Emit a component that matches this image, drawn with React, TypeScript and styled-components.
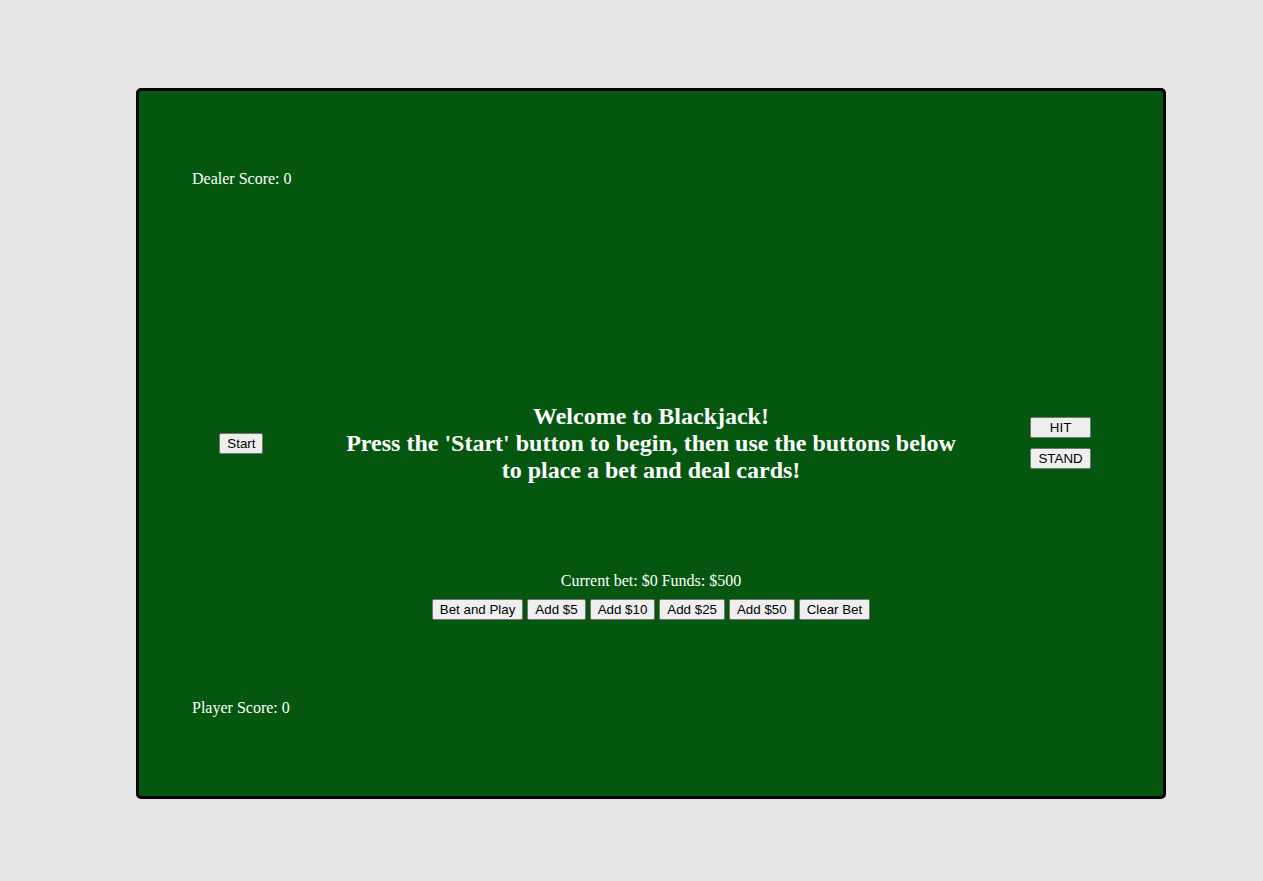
import React from "react";
import styled, { createGlobalStyle } from "styled-components";

const GlobalStyle = createGlobalStyle`
  html, body {
    margin: 0;
    padding: 0;
    background-color: #e5e5e5;
    font-family: "Liberation Serif", "Times New Roman", serif;
  }
`;

const Page = styled.div`
  padding: 88px 0 82px 136px;
`;

const Table = styled.div`
  box-sizing: content-box;
  width: 1024px;
  height: 705px;
  background-color: #05570f;
  border: 3px solid #000;
  border-radius: 5px;
  display: flex;
  flex-direction: column;
  color: #fff;
`;

const HandArea = styled.div<{ $height: number }>`
  height: ${(p) => p.$height}px;
  padding: 79px 0 0 53px;
  box-sizing: border-box;
`;

const Score = styled.div`
  font-size: 16px;
  line-height: 18px;
`;

const MiddleRow = styled.div`
  height: 126px;
  display: grid;
  grid-template-columns: 20% 60% 20%;
  align-items: center;
`;

const SideColumn = styled.div`
  display: flex;
  flex-direction: column;
  align-items: center;
  gap: 10px;
`;

const Message = styled.h2`
  margin: 0;
  text-align: center;
  font-size: 24px;
  line-height: 27px;
  font-weight: bold;
`;

const Button = styled.button<{ $width?: number }>`
  font-family: "Liberation Sans", Arial, sans-serif;
  font-size: 13.333px;
  line-height: 15px;
  color: #000;
  background-color: #efefef;
  border: 1px solid #767676;
  border-radius: 2px;
  padding: 2px 7px;
  margin: 0;
  width: ${(p) => (p.$width ? `${p.$width}px` : "auto")};
  cursor: pointer;
  &:hover {
    background-color: #e5e5e5;
  }
`;

const BetArea = styled.div`
  height: 114px;
  padding-top: 66px;
  box-sizing: border-box;
  display: flex;
  flex-direction: column;
  align-items: center;
  gap: 9px;
`;

const BetInfo = styled.div`
  font-size: 16px;
  line-height: 18px;
`;

const BetButtons = styled.div`
  display: flex;
  gap: 4px;
`;

export default function App() {
  const bet = 0;
  const funds = 500;
  const chips = [5, 10, 25, 50];

  return (
    <>
      <GlobalStyle />
      <Page>
        <Table>
          <HandArea $height={289}>
            <Score>Dealer Score: 0</Score>
          </HandArea>
          <MiddleRow>
            <SideColumn>
              <Button>Start</Button>
            </SideColumn>
            <Message>
              Welcome to Blackjack!
              <br />
              Press the 'Start' button to begin, then use the buttons below
              to place a bet and deal cards!
            </Message>
            <SideColumn>
              <Button $width={61}>HIT</Button>
              <Button $width={61}>STAND</Button>
            </SideColumn>
          </MiddleRow>
          <BetArea>
            <BetInfo>
              Current bet: ${bet} Funds: ${funds}
            </BetInfo>
            <BetButtons>
              <Button>Bet and Play</Button>
              {chips.map((c) => (
                <Button key={c}>Add ${c}</Button>
              ))}
              <Button>Clear Bet</Button>
            </BetButtons>
          </BetArea>
          <HandArea $height={176}>
            <Score>Player Score: 0</Score>
          </HandArea>
        </Table>
      </Page>
    </>
  );
}
